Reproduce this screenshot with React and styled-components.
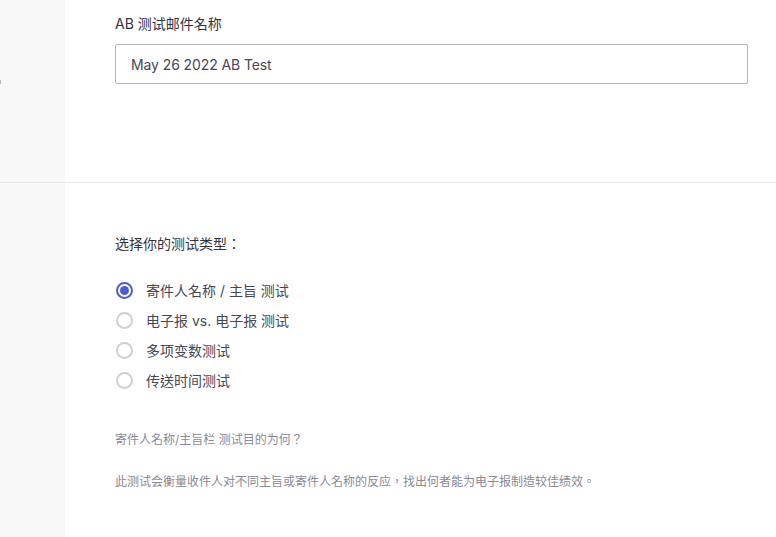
import React from 'react'
import styled, { createGlobalStyle } from 'styled-components'

const GlobalStyle = createGlobalStyle`
    html, body {
        margin: 0;
        padding: 0;
        background: #fff;
    }
    body {
        font-family: "Inter", "Noto Sans CJK TC", sans-serif;
        color: #3a3a48;
    }
`

const TEST_TYPES = [
    '寄件人名称 / 主旨 测试',
    '电子报 vs. 电子报 测试',
    '多项变数测试',
    '传送时间测试',
]

class App extends React.Component {
    state = { selected: 0 }

    render() {
        return (
            <Page>
                <GlobalStyle />
                <Section height={182} bordered>
                    <Side>
                        <SideMark />
                    </Side>
                    <NameContent>
                        <FieldLabel>AB 测试邮件名称</FieldLabel>
                        <TextInput defaultValue="May 26 2022 AB Test" />
                    </NameContent>
                </Section>

                <Section height={354}>
                    <Side />
                    <TypeContent>
                        <Heading>选择你的测试类型：</Heading>
                        <RadioList>
                            {TEST_TYPES.map((label, i) => (
                                <RadioRow key={label} onClick={() => this.setState({ selected: i })}>
                                    <RadioDot checked={this.state.selected === i} />
                                    <RadioText>{label}</RadioText>
                                </RadioRow>
                            ))}
                        </RadioList>
                        <HelpTitle>寄件人名称/主旨栏 测试目的为何？</HelpTitle>
                        <HelpText>此测试会衡量收件人对不同主旨或寄件人名称的反应，找出何者能为电子报制造较佳绩效。</HelpText>
                    </TypeContent>
                </Section>
            </Page>
        )
    }
}

const Page = styled.div`
    width: 776px;
    height: 537px;
    overflow: hidden;
    display: flex;
    flex-direction: column;
`

const Section = styled.section`
    display: flex;
    height: ${props => props.height}px;
    flex-shrink: 0;
    border-bottom: ${props => props.bordered ? '1px solid #e8e8e8' : 'none'};
`

const Side = styled.div`
    width: 65px;
    flex-shrink: 0;
    background: #f8f8f8;
    position: relative;
`

const SideMark = styled.span`
    position: absolute;
    left: 0;
    top: 80px;
    width: 1px;
    height: 4px;
    background: #b8b8c0;
`

const NameContent = styled.div`
    flex: 1;
    padding: 14px 28px 0 50px;
    display: flex;
    flex-direction: column;
`

const FieldLabel = styled.label`
    font-size: 14px;
    line-height: 20px;
    color: #333340;
    margin-bottom: 10px;
`

const TextInput = styled.input`
    box-sizing: border-box;
    width: 100%;
    height: 40px;
    border: 1px solid #b4b4bc;
    border-radius: 2px;
    padding: 0 15px;
    font-family: "Inter", "Noto Sans CJK TC", sans-serif;
    font-size: 14px;
    letter-spacing: -0.1px;
    color: #474756;
    outline: none;
`

const TypeContent = styled.div`
    flex: 1;
    padding: 51px 28px 0 50px;
    display: flex;
    flex-direction: column;
`

const Heading = styled.div`
    font-size: 14px;
    line-height: 20px;
    color: #333340;
`

const RadioList = styled.div`
    display: flex;
    flex-direction: column;
    margin-top: 21px;
`

const RadioRow = styled.div`
    display: flex;
    align-items: center;
    height: 30px;
    cursor: pointer;
`

const RadioDot = styled.span`
    box-sizing: border-box;
    width: 17px;
    height: 17px;
    border-radius: 50%;
    border: 2px solid ${props => props.checked ? '#4f5bd5' : '#cfcfd4'};
    margin-left: 1px;
    margin-right: 13px;
    display: flex;
    align-items: center;
    justify-content: center;

    &::after {
        content: '';
        width: 9px;
        height: 9px;
        border-radius: 50%;
        background: ${props => props.checked ? '#4f5bd5' : 'transparent'};
    }
`

const RadioText = styled.span`
    font-size: 14px;
    color: #474756;
`

const HelpTitle = styled.div`
    font-size: 12px;
    line-height: 18px;
    color: #8a8a96;
    margin-top: 36px;
`

const HelpText = styled.div`
    font-size: 12px;
    line-height: 18px;
    color: #8a8a96;
    margin-top: 24px;
`

export default App
